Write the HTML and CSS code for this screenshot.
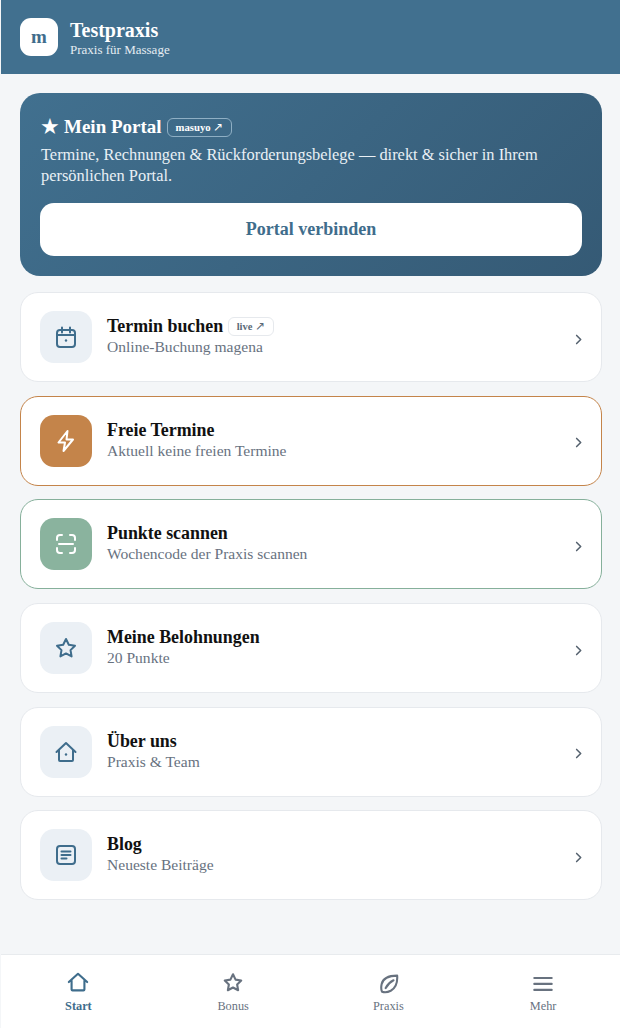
FILE: index.html
```html
<!DOCTYPE html>
<html lang="de">
<head>
  <meta charset="UTF-8">
  <meta name="viewport" content="width=device-width, initial-scale=1.0">
  <title>Testpraxis</title>
  <link rel="stylesheet" href="styles.css">
</head>
<body>
  <div class="app">
    <header class="top-bar">
      <div class="logo">m</div>
      <div class="top-text">
        <div class="top-title">Testpraxis</div>
        <div class="top-sub">Praxis für Massage</div>
      </div>
    </header>

    <main class="content">
      <section class="hero">
        <h1 class="hero-title"><span class="hero-star">★</span><span>Mein Portal</span><span class="hero-tag">masuyo <span class="tag-arrow">↗</span></span></h1>
        <p class="hero-text">Termine, Rechnungen &amp; Rückforderungsbelege — direkt &amp; sicher in Ihrem persönlichen Portal.</p>
        <button class="hero-button">Portal verbinden</button>
      </section>

      <a class="card">
        <div class="icon-box">
          <svg class="icon" viewBox="0 0 24 24"><rect x="3" y="5" width="18" height="17" rx="3"/><path d="M8 2.500v5M16 2.500v5M3 10h18"/><circle class="dot" cx="12" cy="15.500" r="1.200"/></svg>
        </div>
        <div class="card-body">
          <div class="card-title">Termin buchen <span class="card-tag">live <span class="tag-arrow">↗</span></span></div>
          <div class="card-sub">Online-Buchung magena</div>
        </div>
        <svg class="chevron" viewBox="0 0 24 24"><path d="M9 5.500l6.500 6.500L9 18.500"/></svg>
      </a>

      <a class="card card-orange">
        <div class="icon-box box-orange">
          <svg class="icon" viewBox="0 0 24 24"><path d="M13.500 2L4.500 13.500h6.500L9.500 22l9.500-11.500h-6.500z"/></svg>
        </div>
        <div class="card-body">
          <div class="card-title">Freie Termine</div>
          <div class="card-sub">Aktuell keine freien Termine</div>
        </div>
        <svg class="chevron" viewBox="0 0 24 24"><path d="M9 5.500l6.500 6.500L9 18.500"/></svg>
      </a>

      <a class="card card-green">
        <div class="icon-box box-green">
          <svg class="icon" viewBox="0 0 24 24"><path d="M3 8V6a3 3 0 0 1 3-3h2M16 3h2a3 3 0 0 1 3 3v2M21 16v2a3 3 0 0 1-3 3h-2M8 21H6a3 3 0 0 1-3-3v-2M5 12h14"/></svg>
        </div>
        <div class="card-body">
          <div class="card-title">Punkte scannen</div>
          <div class="card-sub">Wochencode der Praxis scannen</div>
        </div>
        <svg class="chevron" viewBox="0 0 24 24"><path d="M9 5.500l6.500 6.500L9 18.500"/></svg>
      </a>

      <a class="card">
        <div class="icon-box">
          <svg class="icon" viewBox="0 0 24 24"><path d="M12 3l2.800 5.800 6.200.9-4.500 4.400 1.100 6.300L12 17.400l-5.600 3 1.100-6.300L3 9.700l6.200-.9z"/></svg>
        </div>
        <div class="card-body">
          <div class="card-title">Meine Belohnungen</div>
          <div class="card-sub">20 Punkte</div>
        </div>
        <svg class="chevron" viewBox="0 0 24 24"><path d="M9 5.500l6.500 6.500L9 18.500"/></svg>
      </a>

      <a class="card">
        <div class="icon-box">
          <svg class="icon" viewBox="0 0 24 24"><path d="M2.500 12L12 3l9.500 9M5 10v10a1 1 0 0 0 1 1h12a1 1 0 0 0 1-1V10"/><circle class="dot" cx="12" cy="14.500" r="1.200"/></svg>
        </div>
        <div class="card-body">
          <div class="card-title">Über uns</div>
          <div class="card-sub">Praxis &amp; Team</div>
        </div>
        <svg class="chevron" viewBox="0 0 24 24"><path d="M9 5.500l6.500 6.500L9 18.500"/></svg>
      </a>

      <a class="card">
        <div class="icon-box">
          <svg class="icon" viewBox="0 0 24 24"><rect x="3" y="3" width="18" height="18" rx="3"/><path d="M7.500 8.500h9M7.500 12h9M7.500 15.500h5"/></svg>
        </div>
        <div class="card-body">
          <div class="card-title">Blog</div>
          <div class="card-sub">Neueste Beiträge</div>
        </div>
        <svg class="chevron" viewBox="0 0 24 24"><path d="M9 5.500l6.500 6.500L9 18.500"/></svg>
      </a>
    </main>

    <nav class="tabs">
      <a class="tab active">
        <svg class="tab-icon" viewBox="0 0 24 24"><path d="M2 11L12 2l10 9M5 9v10a1 1 0 0 0 1 1h12a1 1 0 0 0 1-1V9"/></svg>
        <span>Start</span>
      </a>
      <a class="tab">
        <svg class="tab-icon" viewBox="0 0 24 24"><path d="M12 2.500l2.800 5.800 6.200.9-4.500 4.400 1.100 6.300-5.600-3-5.600 3 1.100-6.300L3 9.200l6.200-.9z"/></svg>
        <span>Bonus</span>
      </a>
      <a class="tab tab-shift">
        <svg class="tab-icon" viewBox="0 0 24 24"><path d="M22 4C14 4 6.500 6.500 5 13.500 4.300 17 4.500 19.500 5.500 21.500c3 1 6.500.5 9.500-1 5.500-3 7.500-9.500 7-16.500zM9.500 17.500c2-4 4.500-6.500 8.500-8.500"/></svg>
        <span>Praxis</span>
      </a>
      <a class="tab tab-shift">
        <svg class="tab-icon" viewBox="0 0 24 24"><path d="M2.500 6.500h19M2.500 13h19M2.500 19.500h19"/></svg>
        <span>Mehr</span>
      </a>
    </nav>
  </div>
</body>
</html>
```

FILE: styles.css
```css
* {
  box-sizing: border-box;
}
body {
  margin: 0;
  background-color: #f4f6f8;
  font-family: "Liberation Serif", "Times New Roman", serif;
}
.app {
  display: flex;
  flex-direction: column;
  min-height: 100vh;
}
.top-bar {
  display: flex;
  align-items: center;
  gap: 12px;
  height: 74px;
  margin-left: 1px;
  padding: 0 19px;
  background-color: #41708f;
  color: #fff;
}
.logo {
  display: flex;
  align-items: center;
  justify-content: center;
  width: 38px;
  height: 38px;
  border-radius: 11px;
  background: #fff;
  color: #3f6d8c;
  font-size: 19px;
  font-weight: bold;
}
.top-text {
  padding-top: 1px;
}
.top-title {
  font-size: 20px;
  font-weight: bold;
  line-height: 22px;
}
.top-sub {
  margin-top: 1px;
  font-size: 13px;
  line-height: 15px;
  color: #e4ecf2;
}
.content {
  display: flex;
  flex-direction: column;
  gap: 13.670px;
  padding: 19px 18px 0 20px;
}
.hero {
  height: 183px;
  margin-bottom: 2.500px;
  padding: 22px 20px 20px;
  border-radius: 20px;
  background: linear-gradient(135deg, #41708f, #355a75);
  color: #fff;
}
.hero-title {
  display: flex;
  align-items: center;
  gap: 4px;
  margin: 0;
  font-size: 19px;
  font-weight: bold;
  line-height: 24px;
}
.hero-star {
  font-size: 22px;
  font-weight: normal;
}
.hero-tag {
  margin-left: 1px;
  padding: 0 8px;
  border: 1px solid #8fafc4;
  border-radius: 6px;
  font-size: 10.700px;
  line-height: 17px;
}
.tag-arrow {
  font-size: 12px;
  font-weight: normal;
}
.hero-text {
  margin: 5px 0 17px;
  padding-left: 1px;
  font-size: 16.400px;
  line-height: 21px;
  color: #e9f0f5;
}
.hero-button {
  display: block;
  width: 100%;
  height: 53px;
  border: 0;
  border-radius: 14px;
  background: #fff;
  color: #3f6d8c;
  font-family: inherit;
  font-size: 18px;
  font-weight: bold;
}
.card {
  display: flex;
  align-items: center;
  gap: 15px;
  height: 90px;
  padding: 0 15px 0 19px;
  border: 1px solid #e6e9ed;
  border-radius: 18px;
  background: #fff;
}
.card-orange {
  border-color: #c4844a;
}
.card-green {
  border-color: #86b09b;
}
.icon-box {
  display: flex;
  align-items: center;
  justify-content: center;
  flex: none;
  width: 52px;
  height: 52px;
  border-radius: 14px;
  background: #ebf0f5;
  color: #3f6d8c;
}
.box-orange {
  background: #c4844a;
  color: #fff;
}
.box-green {
  background: #8ab39e;
  color: #fff;
}
.icon {
  width: 24px;
  height: 24px;
  fill: none;
  stroke: currentColor;
  stroke-width: 2;
  stroke-linecap: round;
  stroke-linejoin: round;
}
.dot {
  fill: currentColor;
  stroke: none;
}
.card-body {
  flex: 1;
  min-width: 0;
  padding-bottom: 1px;
}
.card-title {
  display: flex;
  align-items: center;
  gap: 5px;
  font-size: 17.900px;
  font-weight: bold;
  line-height: 21px;
  color: #111;
}
.card-tag {
  padding: 0 7.500px;
  border: 1px solid #e6e9ed;
  border-radius: 6px;
  color: #5b6b78;
  font-size: 10.500px;
  font-weight: bold;
  line-height: 16px;
}
.card-sub {
  font-size: 15.550px;
  line-height: 20px;
  color: #68727f;
}
.chevron {
  flex: none;
  width: 15px;
  height: 15px;
  margin-top: 4px;
  fill: none;
  stroke: #56626f;
  stroke-width: 2.500;
  stroke-linecap: round;
  stroke-linejoin: round;
}
.tabs {
  display: grid;
  grid-template-columns: repeat(4, 1fr);
  height: 74px;
  margin-top: auto;
  margin-left: 1px;
  border-top: 1px solid #e8ebee;
  background: #fff;
}
.tab {
  display: flex;
  flex-direction: column;
  align-items: center;
  gap: 5px;
  padding-top: 17px;
  color: #68727f;
  font-size: 12.300px;
  line-height: 15px;
}
.tab-shift {
  padding-left: 1px;
}
.tab.active {
  color: #3f6d8c;
  font-weight: bold;
}
.tab-icon {
  width: 22px;
  height: 22px;
  fill: none;
  stroke: currentColor;
  stroke-width: 2.300;
  stroke-linecap: round;
  stroke-linejoin: round;
}
```
